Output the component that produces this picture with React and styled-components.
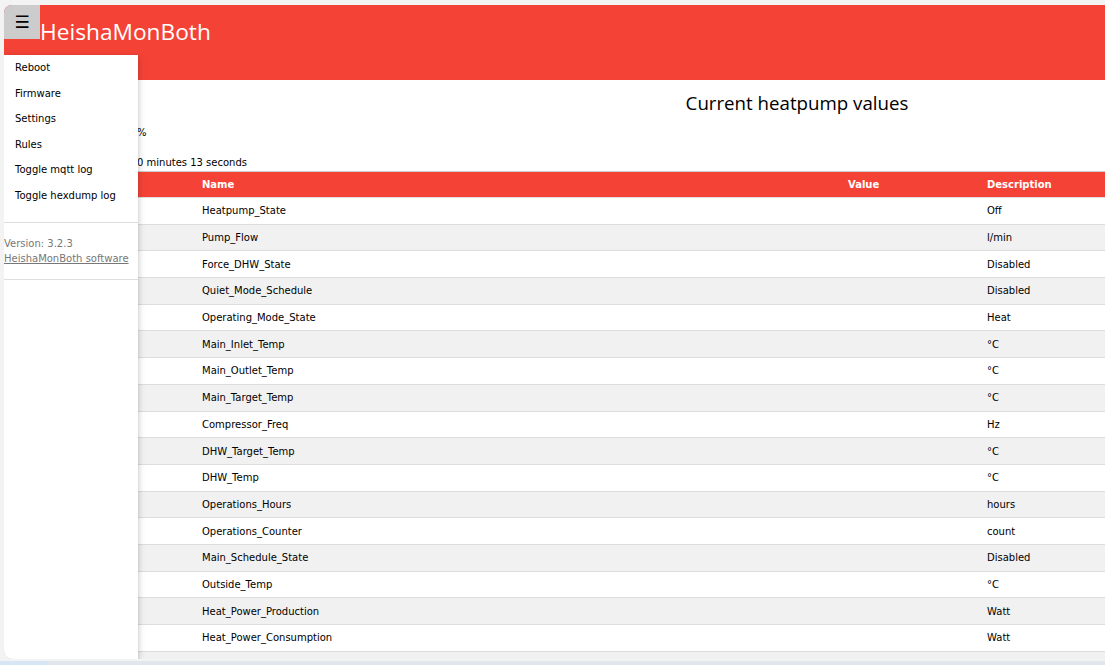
import React from 'react';
import styled, {createGlobalStyle} from "styled-components";

const GlobalStyle = createGlobalStyle`
  html, body {
    margin: 0;
    padding: 0;
    background: #f3f3f3;
    overflow: hidden;
  }
  #root {
    height: 665px;
  }
`
const Screen = styled.div`
  height: 665px;
  display: flex;
  flex-direction: column;
`
const Window = styled.div`
  margin: 5px 0 0 4px;
  height: 654px;
  position: relative;
  overflow: hidden;
  background: #fff;
  border-top-left-radius: 8px;
  border-bottom-left-radius: 8px;
  font-family: "DejaVu Sans", Verdana, sans-serif;
  font-size: 10px;
  color: #000;
`
const BottomBar = styled.div`
  margin-top: 2px;
  height: 4px;
  display: flex;
  background: #e1e5ec;
`
const BottomTab = styled.div`
  width: 48px;
  background: #d6e6f4;
`
const Page = styled.div`
  width: 1586px;
`
const Header = styled.div`
  height: 75px;
  background: #f44336;
  display: flex;
  align-items: flex-start;
`
const MenuButton = styled.div`
  width: 36px;
  height: 34px;
  background: #ccc;
  display: flex;
  align-items: center;
  justify-content: center;
  font-size: 17px;
  color: #000;
`
const Title = styled.div`
  color: #fff;
  font-family: "Open Sans", "Noto Sans", sans-serif;
  font-size: 22.7px;
  line-height: 30px;
  padding-top: 12px;
`
const Sidebar = styled.div`
  position: absolute;
  top: 50px;
  left: 0;
  bottom: 0;
  width: 134px;
  background: #fff;
  z-index: 2;
  box-shadow: 0 2px 5px rgba(0, 0, 0, 0.16), 0 2px 10px rgba(0, 0, 0, 0.12);
  border-bottom-left-radius: 8px;
`
const MenuItem = styled.div`
  padding: 6px 11px;
  line-height: 13.6px;
  white-space: nowrap;
`
const Divider = styled.div`
  border-top: 1px solid #ddd;
  margin-top: ${props => props.gap || 0}px;
`
const VersionBox = styled.div`
  padding: 13px 0 13px;
  color: #777;
  line-height: 15px;
  white-space: nowrap;
`
const SoftwareLink = styled.a`
  color: #777;
  text-decoration: underline;
`
const Heading = styled.h2`
  margin: 0;
  padding-top: 12px;
  height: 32px;
  text-align: center;
  font-family: "Open Sans", "Noto Sans", sans-serif;
  font-weight: 400;
  font-size: 18.7px;
  line-height: 22px;
`
const Stat = styled.div`
  padding-left: 8px;
  line-height: 14px;
  height: 14px;
  margin-top: ${props => props.gap}px;
`
const StatLabel = styled.span`
  display: inline-block;
  vertical-align: top;
  width: 125px;
  white-space: nowrap;
  overflow: hidden;
`
const Table = styled.table`
  margin-top: 1px;
  width: 100%;
  border-collapse: collapse;
  border-top: 1px solid #ccc;
  table-layout: fixed;
`
const HeadCell = styled.th`
  background: #f44336;
  color: #fff;
  text-align: left;
  font-weight: bold;
  padding: 6px 8px;
  line-height: 13px;
  border-bottom: 1px solid #ddd;
`
const Row = styled.tr`
  background: ${props => props.striped ? "#f1f1f1" : "#fff"};
`
const Cell = styled.td`
  padding: 6.35px 8px;
  line-height: 13px;
  border-bottom: 1px solid #ddd;
  white-space: nowrap;
`

const rows = [
    ["Heatpump_State", "Off"],
    ["Pump_Flow", "l/min"],
    ["Force_DHW_State", "Disabled"],
    ["Quiet_Mode_Schedule", "Disabled"],
    ["Operating_Mode_State", "Heat"],
    ["Main_Inlet_Temp", "°C"],
    ["Main_Outlet_Temp", "°C"],
    ["Main_Target_Temp", "°C"],
    ["Compressor_Freq", "Hz"],
    ["DHW_Target_Temp", "°C"],
    ["DHW_Temp", "°C"],
    ["Operations_Hours", "hours"],
    ["Operations_Counter", "count"],
    ["Main_Schedule_State", "Disabled"],
    ["Outside_Temp", "°C"],
    ["Heat_Power_Production", "Watt"],
    ["Heat_Power_Consumption", "Watt"],
    ["Powerful_Mode_Time", "Min"],
];

const menu = ["Reboot", "Firmware", "Settings", "Rules", "Toggle mqtt log", "Toggle hexdump log"];

const App = () => {
    return (
        <Screen>
            <GlobalStyle/>
            <Window>
                <Page>
                    <Header>
                        <MenuButton>☰</MenuButton>
                        <Title>HeishaMonBoth</Title>
                    </Header>
                    <Heading>Current heatpump values</Heading>
                    <Stat gap={2}><StatLabel>Wifi signal strength: 70 </StatLabel>%</Stat>
                    <Stat gap={16}><StatLabel>Uptime: 0 days 0 hours 1</StatLabel>0 minutes 13 seconds</Stat>
                    <Table>
                        <colgroup>
                            <col style={{width: 190}}/>
                            <col style={{width: 646}}/>
                            <col style={{width: 139}}/>
                            <col/>
                        </colgroup>
                        <thead>
                        <tr>
                            <HeadCell>Topic</HeadCell>
                            <HeadCell>Name</HeadCell>
                            <HeadCell>Value</HeadCell>
                            <HeadCell>Description</HeadCell>
                        </tr>
                        </thead>
                        <tbody>
                        {rows.map((r, i) => (
                            <Row key={r[0]} striped={i % 2 === 1}>
                                <Cell>TOP{i}</Cell>
                                <Cell>{r[0]}</Cell>
                                <Cell></Cell>
                                <Cell>{r[1]}</Cell>
                            </Row>
                        ))}
                        </tbody>
                    </Table>
                </Page>
                <Sidebar>
                    {menu.map((m) => <MenuItem key={m}>{m}</MenuItem>)}
                    <Divider gap={13}/>
                    <VersionBox>
                        Version: 3.2.3<br/>
                        <SoftwareLink>HeishaMonBoth software</SoftwareLink>
                    </VersionBox>
                    <Divider/>
                </Sidebar>
            </Window>
            <BottomBar><BottomTab/></BottomBar>
        </Screen>
    );
};

export default App;
